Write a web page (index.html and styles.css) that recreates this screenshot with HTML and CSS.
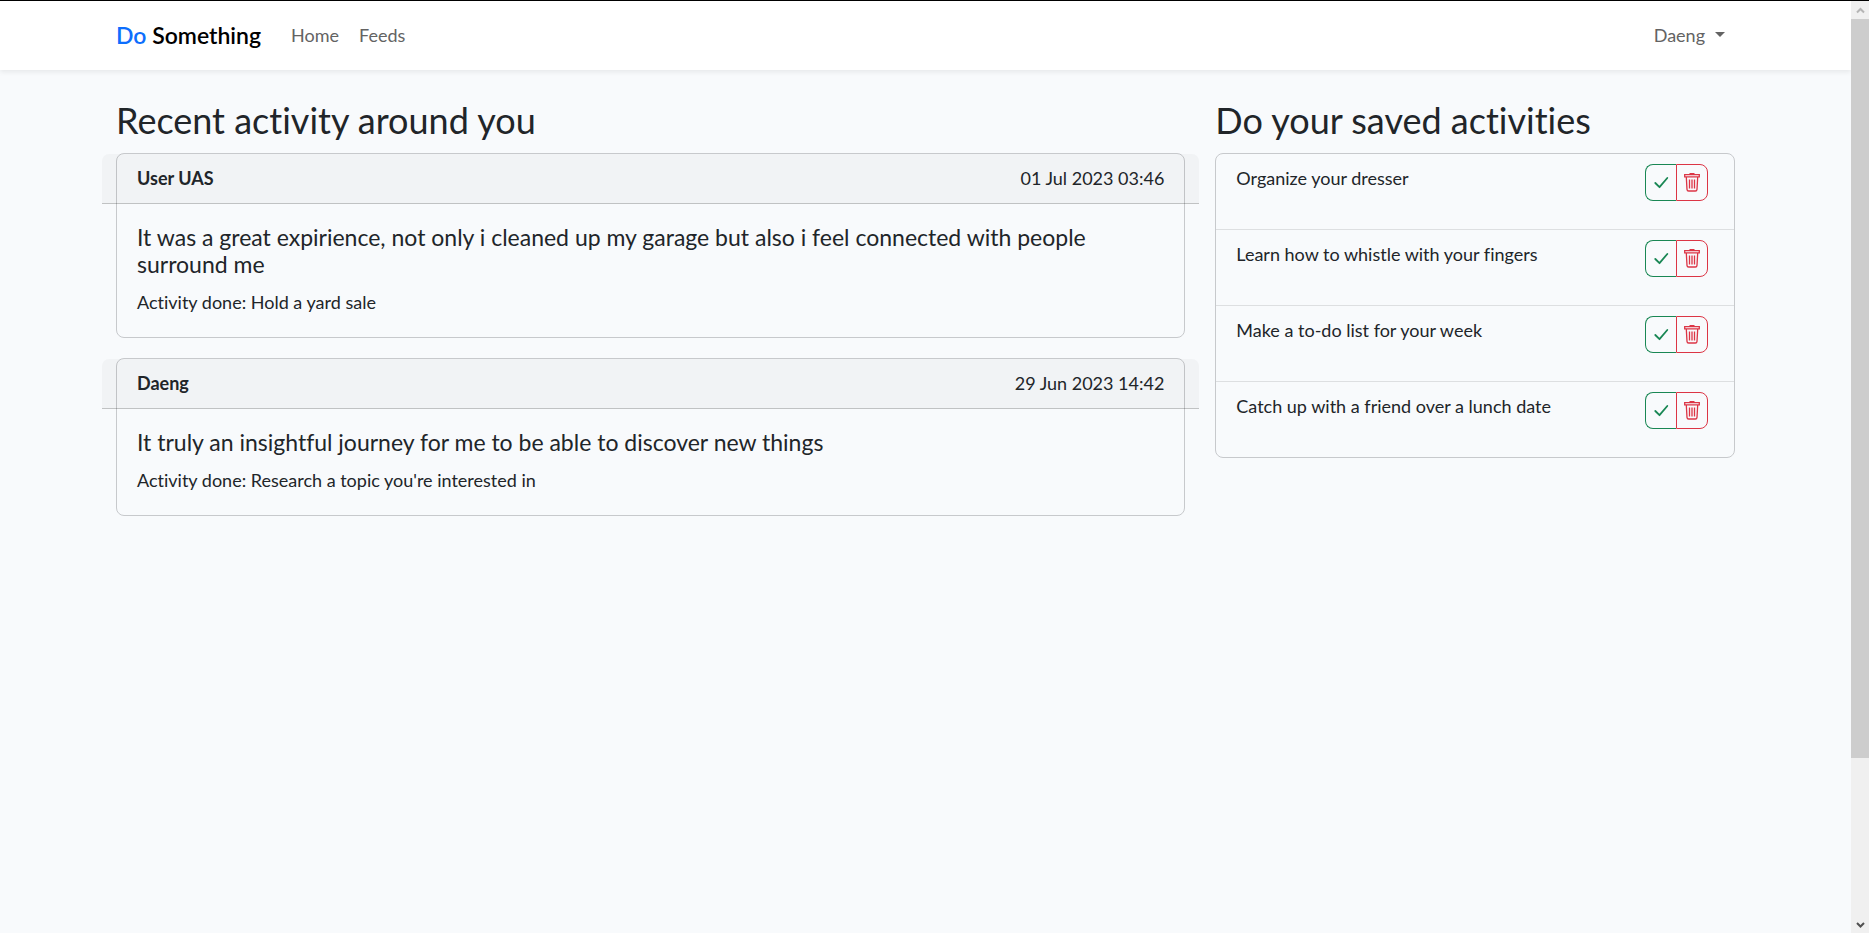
FILE: index.html
```
<!DOCTYPE html>
<html lang="en">
<head>
<meta charset="utf-8">
<meta name="viewport" content="width=device-width, initial-scale=1">
<title>Do Something</title>
<link rel="stylesheet" href="styles.css">
</head>
<body>
<svg class="sprite" aria-hidden="true">
  <symbol id="check" viewBox="0 0 26 26"><path fill="none" stroke="currentColor" stroke-width="1.8" stroke-linecap="round" stroke-linejoin="round" d="M7.300 13l4.200 4.200 7.800-9.200"/></symbol>
  <symbol id="trash" viewBox="0 0 18 20"><path fill="none" stroke="currentColor" stroke-width="1.3" d="M1.700 2.600h14.600v2.200H1.700zM3.300 5l.700 12.400q.100 1.600 1.600 1.600h6.800q1.500 0 1.600-1.600L14.700 5M6.500 7.500v9M9 7.500v9M11.500 7.500v9"/><path d="M6.500 1h5v1.500h-5z"/></symbol>
</svg>
<div class="page">
  <nav class="navbar">
    <div class="container navbar-inner">
      <a class="brand" href="#"><span class="brand-accent">Do</span> Something</a>
      <a class="nav-link" href="#">Home</a>
      <a class="nav-link" href="#">Feeds</a>
      <button class="user-menu" type="button">Daeng <span class="caret"></span></button>
    </div>
  </nav>
  <main class="container row">
    <section class="feed">
      <h2 class="title">Recent activity around you</h2>
      <article class="card">
        <header class="card-header"><strong class="author">User UAS</strong><time>01 Jul 2023 03:46</time></header>
        <div class="card-body">
          <h5 class="card-title">It was a great expirience, not only i cleaned up my garage but also i feel connected with people surround me</h5>
          <p class="card-text">Activity done: Hold a yard sale</p>
        </div>
      </article>
      <article class="card">
        <header class="card-header"><strong class="author">Daeng</strong><time>29 Jun 2023 14:42</time></header>
        <div class="card-body">
          <h5 class="card-title">It truly an insightful journey for me to be able to discover new things</h5>
          <p class="card-text">Activity done: Research a topic you're interested in</p>
        </div>
      </article>
    </section>
    <section class="saved">
      <h2 class="title">Do your saved activities</h2>
      <ul class="list">
        <li class="item"><span>Organize your dresser</span><div class="actions"><button class="btn btn-done" type="button" aria-label="Done"><svg class="icon-check"><use href="#check"/></svg></button><button class="btn btn-delete" type="button" aria-label="Delete"><svg class="icon-trash"><use href="#trash"/></svg></button></div></li>
        <li class="item"><span>Learn how to whistle with your fingers</span><div class="actions"><button class="btn btn-done" type="button" aria-label="Done"><svg class="icon-check"><use href="#check"/></svg></button><button class="btn btn-delete" type="button" aria-label="Delete"><svg class="icon-trash"><use href="#trash"/></svg></button></div></li>
        <li class="item"><span>Make a to-do list for your week</span><div class="actions"><button class="btn btn-done" type="button" aria-label="Done"><svg class="icon-check"><use href="#check"/></svg></button><button class="btn btn-delete" type="button" aria-label="Delete"><svg class="icon-trash"><use href="#trash"/></svg></button></div></li>
        <li class="item"><span>Catch up with a friend over a lunch date</span><div class="actions"><button class="btn btn-done" type="button" aria-label="Done"><svg class="icon-check"><use href="#check"/></svg></button><button class="btn btn-delete" type="button" aria-label="Delete"><svg class="icon-trash"><use href="#trash"/></svg></button></div></li>
      </ul>
    </section>
  </main>
</div>
<div class="scrollbar" aria-hidden="true">
  <svg class="arrow arrow-up" viewBox="0 0 18 18"><path d="M6 11.500 9.500 8l3.500 3.500"/></svg>
  <div class="track"><div class="thumb"></div></div>
  <svg class="arrow arrow-down" viewBox="0 0 18 18"><path d="M6 8l3.500 3.500L13 8"/></svg>
</div>
</body>
</html>
```
FILE: styles.css
```
* { box-sizing: border-box; }
body {
  margin: 0;
  min-height: 100vh;
  display: flex;
  border-top: 1px solid #000;
  background: #f8fafc;
  color: #212529;
  font: 400 18px/28px Lato, "Open Sans", sans-serif;
  font-variant-ligatures: none;
}
.sprite { display: none; }
.page { flex: 1; min-width: 0; }
.container { width: 100%; max-width: 1649px; margin: 0 auto; padding: 0 15px; }
.navbar { background: #fff; box-shadow: 0 2px 5px rgba(0, 0, 0, .075); }
.navbar-inner { display: flex; align-items: center; height: 69px; padding-bottom: 2px; }
.brand { margin-right: 20px; color: #000; font-size: 23px; font-weight: 600; text-decoration: none; }
.brand-accent { color: #0d6efd; }
.nav-link { padding: 10px; color: #636363; text-decoration: none; }
.user-menu {
  display: flex;
  align-items: center;
  gap: 10px;
  margin-left: auto;
  padding: 10px;
  border: 0;
  background: none;
  color: #636363;
  font: inherit;
}
.caret { border: 5px solid transparent; border-top-color: currentColor; border-bottom: 0; }
.row { display: flex; padding: 29px 0; }
.feed { flex: 0 0 66.6667%; padding: 0 15px; }
.saved { flex: 1; min-width: 0; padding: 0 15px; }
.title { margin: 0 0 12px; font-size: 36px; line-height: 42px; font-weight: 400; }
.card { margin-bottom: 20px; border: 1px solid #c7c9cc; border-radius: 8px; }
.card-header {
  display: flex;
  justify-content: space-between;
  margin: 0 -15px;
  padding: 10px 35px 11px;
  background: rgba(33, 37, 41, .03);
  border-bottom: 1px solid rgba(0, 0, 0, .2);
  border-radius: 7px 7px 0 0;
}
.author { font-weight: 700; }
.card-body { padding: 20px; }
.card-title { margin: 0 0 10px; font-size: 23px; line-height: 27px; font-weight: 400; }
.card-text { margin: 0 0 1px; }
.list { margin: 0; padding: 0; list-style: none; border: 1px solid #c7c9cc; border-radius: 8px; }
.item { display: flex; justify-content: space-between; min-height: 76px; padding: 10px 26px 10px 20px; border-bottom: 1px solid #dddfe1; }
.item:last-child { border-bottom: 0; min-height: 75px; }
.actions { display: flex; align-items: flex-start; }
.btn {
  display: flex;
  align-items: center;
  justify-content: center;
  width: 32px;
  height: 37px;
  padding: 0;
  border: 1px solid;
  background: none;
}
.btn-done { width: 31px; color: #198754; border-radius: 8px 0 0 8px; border-right: 0; }
.btn-delete { color: #dc3545; border-radius: 0 8px 8px 0; }
.btn svg { fill: currentColor; }
.icon-check { width: 26px; height: 26px; }
.icon-trash { width: 18px; height: 20px; margin-bottom: 2px; }
.scrollbar { display: flex; flex-direction: column; width: 18px; background: #f0f0f0; }
.track { flex: 1; }
.thumb { height: 82.500%; background: #cdcdcd; }
.arrow { width: 18px; height: 18px; fill: none; stroke-width: 2; }
.arrow-up { stroke: #b5b5b5; }
.arrow-down { stroke: #505050; }
```
